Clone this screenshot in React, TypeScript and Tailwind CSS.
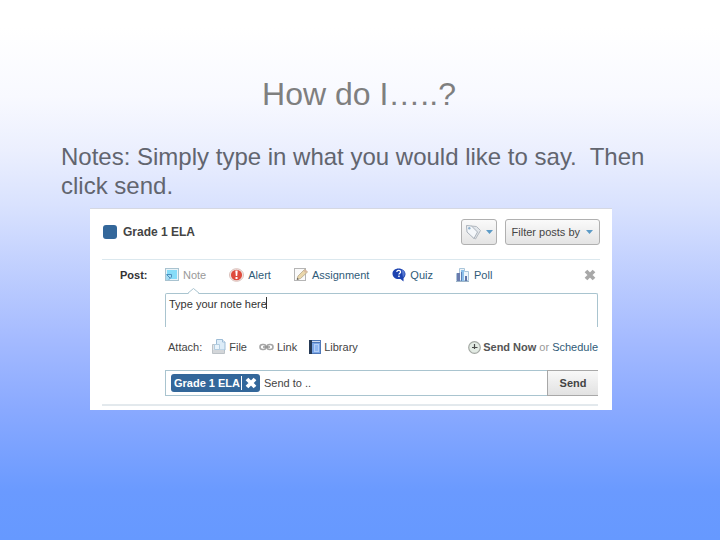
import type { ReactNode } from "react";

/* ---------- icons ---------- */

function NoteIcon() {
  return (
    <svg width="14" height="14" viewBox="0 0 14 14" aria-hidden="true">
      <rect x="0.5" y="0.5" width="13" height="12" fill="#e8f3f8" stroke="#a9c3d0" />
      <rect x="2" y="2" width="10" height="9" fill="#86dcf8" />
      <path d="M1 6h6v3l-3 3H1z" fill="#a5dcf2" />
      <path d="M1.500 6.500h5v2.500l-2.500 2.500M2 7l3 3" fill="none" stroke="#4a8fbe" />
    </svg>
  );
}

function AlertIcon() {
  return (
    <svg width="15" height="14" viewBox="0 0 15 14" aria-hidden="true">
      <ellipse cx="7.500" cy="7" rx="7" ry="6.300" fill="#f3ece9" stroke="#d9bfba" />
      <ellipse cx="7.500" cy="7" rx="5.600" ry="5.200" fill="#de4b3c" />
      <path d="M6.300 2.500h2.400l-.5 5.500H6.800z" fill="#fff" />
      <rect x="6.500" y="9" width="2" height="2" fill="#fff" />
    </svg>
  );
}

function AssignmentIcon() {
  return (
    <svg width="14" height="14" viewBox="0 0 14 14" aria-hidden="true">
      <rect x="0.500" y="0.500" width="11" height="12" fill="#fafafa" stroke="#b5b5b5" />
      <path d="M3 11.500l1-3.500L10.500 1.500l3 2.500L6.500 10.500z" fill="#ead7ab" stroke="#b5a88c" strokeWidth="0.800" />
      <path d="M9.500 3l2.500 2 1.500-1.500-2.500-2z" fill="#d8b9a0" />
      <path d="M2.800 11.800l.6-2 1.500 1.400z" fill="#555" />
    </svg>
  );
}

function QuizIcon() {
  return (
    <svg width="14" height="14" viewBox="0 0 14 14" aria-hidden="true">
      <path
        d="M6.500.5C3 .5.5 2.700.5 5.700s2.500 5.300 6 5.300c.8 0 1.500 0 2 0L11.500 13.500l.1-3.500c1.200-1 1.900-2.500 1.900-4 0-3-3-5.500-7-5.500z"
        fill="#1d43b0"
      />
      <path d="M9.500 1.500c2.300.6 3.300 2.200 3.300 4.200 0 1.400-.7 2.700-1.800 3.500z" fill="#5577d0" />
      <path d="M4.700 4c.2-1.200 1-1.700 2-1.700s1.900.6 1.900 1.600c0 1.300-1.700 1.400-1.700 2.700" fill="none" stroke="#fff" strokeWidth="1.300" />
      <rect x="6.200" y="7.600" width="1.500" height="1.500" fill="#fff" />
    </svg>
  );
}

function PollIcon() {
  return (
    <svg width="14" height="14" viewBox="0 0 14 14" aria-hidden="true">
      <path d="M.5 12.500v-7h3v-5h5v3h4v9z" fill="#eef5fa" stroke="#a9c5da" />
      <rect x="1" y="5" width="3" height="8" fill="#6b7cae" />
      <rect x="5" y="2" width="3" height="11" fill="#8cc0ea" />
      <rect x="5" y="4" width="1" height="9" fill="#5c7fb8" />
      <rect x="9" y="8" width="2" height="5" fill="#5f74a8" />
      <path d="M0 13.500h13" stroke="#9db4c8" />
    </svg>
  );
}

function FileIcon() {
  return (
    <svg width="14" height="16" viewBox="0 0 14 16" aria-hidden="true">
      <path d="M.5 5.500h12v9H.5z" fill="#e2e4e6" stroke="#bcc2c7" />
      <path d="M4.500.5h6l2.500 2.500v8h-8.500z" fill="#dcecf8" stroke="#9dbcd6" />
      <path d="M10.500.5v2.500H13" fill="#fff" stroke="#9dbcd6" />
      <path d="M2.500 5.500h5v5h-5z" fill="#eaf4fb" stroke="#b3cde0" />
      <path d="M1 11h11v3H1z" fill="#d3d6d9" />
    </svg>
  );
}

function LinkIcon() {
  return (
    <svg width="15" height="8" viewBox="0 0 15 8" aria-hidden="true">
      <rect x="1" y="1.500" width="6" height="5" rx="2.500" fill="none" stroke="#a6a6a6" strokeWidth="1.600" />
      <rect x="8" y="1.500" width="6" height="5" rx="2.500" fill="none" stroke="#a6a6a6" strokeWidth="1.600" />
      <path d="M4 4h7" stroke="#8f8f8f" strokeWidth="1.400" />
    </svg>
  );
}

function LibraryIcon() {
  return (
    <svg width="12" height="14" viewBox="0 0 12 14" aria-hidden="true">
      <rect width="12" height="14" fill="#4f78b8" />
      <rect width="3" height="14" fill="#263a56" />
      <rect x="3" y="1" width="8" height="1" fill="#cfdcf0" />
      <rect x="3" y="3" width="8" height="10" fill="#7ba6e6" />
      <rect x="5.500" y="4.500" width="4" height="7" fill="#8fb7f2" stroke="#b4cff7" />
    </svg>
  );
}

function ClockIcon() {
  return (
    <svg width="13" height="13" viewBox="0 0 13 13" aria-hidden="true">
      <circle cx="6.500" cy="6.500" r="5.800" fill="#e3ebe4" stroke="#a3a8a3" strokeWidth="1.200" />
      <path d="M6.500 3v5M4 6.500h5.500" stroke="#4a4a4a" strokeWidth="1.200" />
    </svg>
  );
}

function TagIcon() {
  return (
    <svg width="17" height="16" viewBox="0 0 17 16" aria-hidden="true">
      <path d="M6 2l5.500.5 4 4-5 8.500-3-2z" fill="#e2e6ea" stroke="#b3b9c0" />
      <path d="M1.500 1.500l5 .5 6 6-3.500 6.500-7-6.500z" fill="#f4f7fa" stroke="#aab2bb" />
      <circle cx="4.300" cy="4.300" r="1.200" fill="#8fb0cc" />
    </svg>
  );
}

function CloseIcon({ color }: { color: string }) {
  return (
    <svg width="12" height="12" viewBox="0 0 12 12" aria-hidden="true">
      <path d="M2 2l8 8M10 2l-8 8" stroke={color} strokeWidth="3.800" />
    </svg>
  );
}

function Caret() {
  return (
    <svg width="7" height="4" viewBox="0 0 7 4" aria-hidden="true">
      <path d="M0 0h7L3.500 4z" fill="#5d9bc6" />
    </svg>
  );
}

/* ---------- data ---------- */

const postTypes: { label: string; icon: ReactNode; active?: boolean }[] = [
  { label: "Note", icon: <NoteIcon />, active: true },
  { label: "Alert", icon: <AlertIcon /> },
  { label: "Assignment", icon: <AssignmentIcon /> },
  { label: "Quiz", icon: <QuizIcon /> },
  { label: "Poll", icon: <PollIcon /> },
];

const attachments: { label: string; icon: ReactNode }[] = [
  { label: "File", icon: <FileIcon /> },
  { label: "Link", icon: <LinkIcon /> },
  { label: "Library", icon: <LibraryIcon /> },
];

/* ---------- panel ---------- */

function PanelHeader() {
  return (
    <div className="flex items-center border-b border-[#dbe8ee] pt-2.5 pb-3.5">
      <span className="ml-px size-3.5 rounded-[3px] bg-[#33679a]" />
      <h2 className="ml-1.5 text-xs font-bold text-[#444]">Grade 1 ELA</h2>
      <div className="ml-auto flex gap-2">
        <button
          type="button"
          aria-label="Tags"
          className="flex h-[26px] items-center gap-1 rounded-[3px] border border-[#b0b0b0] bg-linear-to-b from-[#fafafa] to-[#e4e4e4] px-[3px]"
        >
          <TagIcon />
          <Caret />
        </button>
        <button
          type="button"
          className="flex h-[26px] items-center gap-1.5 rounded-[3px] border border-[#b0b0b0] bg-linear-to-b from-[#fafafa] to-[#e4e4e4] px-1.5 text-[#444]"
        >
          Filter posts by
          <Caret />
        </button>
      </div>
    </div>
  );
}

function PostTabs() {
  return (
    <div className="flex items-center pt-[7px] pr-1 pl-[18px]">
      <span className="w-[45px] font-bold text-[#333]">Post:</span>
      <div className="flex gap-[23px]">
        {postTypes.map(({ label, icon, active }) => (
          <button
            key={label}
            type="button"
            className={`flex items-center gap-1 ${active ? "text-[#999]" : "text-[#2f5b78]"}`}
          >
            {icon}
            {label}
          </button>
        ))}
      </div>
      <button type="button" aria-label="Close" className="ml-auto">
        <CloseIcon color="#a8a8a8" />
      </button>
    </div>
  );
}

function Composer() {
  return (
    <div className="mr-0.5 ml-[63px]">
      <div className="relative mt-2.5">
        <textarea
          aria-label="Note"
          defaultValue="Type your note here"
          className="block h-[34px] w-full resize-none overflow-hidden rounded-t-[2px] border border-b-0 border-[#a9c4cf] bg-white px-[3px] py-0.5 text-[#333] outline-none"
        />
        <span className="absolute top-1 left-[101px] h-3 w-px bg-[#333]" />
        <svg className="absolute -top-[5px] left-[22px]" width="13" height="7" viewBox="0 0 13 7" aria-hidden="true">
          <path d="M1 6l5.500-5L12 6v1H1z" fill="#fff" />
          <path d="M.5 5.500L6.500.5l6 5" fill="none" stroke="#a9c4cf" />
        </svg>
      </div>

      <div className="mt-3 flex h-4 items-center pl-[3px] text-[#444]">
        <span>Attach:</span>
        <div className="ml-2.5 flex gap-3">
          {attachments.map(({ label, icon }) => (
            <button key={label} type="button" className="flex items-center gap-[3px]">
              {icon}
              {label}
            </button>
          ))}
        </div>
        <div className="ml-auto flex items-center whitespace-nowrap">
          <ClockIcon />
          <button type="button" className="ml-0.5 font-bold text-[#555]">
            Send Now
          </button>
          <span className="mx-[3px] text-[#999]">or</span>
          <a href="#schedule" className="text-[#2f5b78]">
            Schedule
          </a>
        </div>
      </div>

      <div className="mt-[15px] flex h-[26px] items-stretch border border-r-0 border-[#a9c4cf]">
        <div className="my-[3px] ml-[5px] flex items-center rounded-[3px] bg-[#33679a] px-[3px] font-bold text-white">
          Grade 1 ELA
          <button type="button" aria-label="Remove Grade 1 ELA" className="ml-px flex h-3.5 items-center border-l border-white pl-[3px]">
            <CloseIcon color="#fff" />
          </button>
        </div>
        <input
          type="text"
          aria-label="Recipients"
          placeholder="Send to .."
          className="min-w-0 flex-1 px-1 text-[#444] outline-none placeholder:text-[#444]"
        />
        <button
          type="button"
          className="-my-px w-[51px] border border-r-0 border-[#a8a8a8] bg-linear-to-b from-[#f8f8f8] to-[#e2e2e2] font-bold text-[#444]"
        >
          Send
        </button>
      </div>
    </div>
  );
}

export default function App() {
  return (
    <main className="min-h-screen bg-[linear-gradient(to_bottom,#ffffff_5%,#f8f9ff_18%,#ebeffe_28%,#d9e2fe_38%,#a4baff_63%,#89a9ff_76%,#6a9aff_91%,#6699ff_100%)] pt-[74px] font-['Liberation_Sans',Arial,sans-serif]">
      <h1 className="pr-0.5 text-center text-[32px] leading-10 text-[#7f7f7f]">How do I…..?</h1>
      <p className="mt-7 pr-14 pl-[61px] text-2xl leading-[29px] text-[#62656f]">
        Notes: Simply type in what you would like to say.&nbsp; Then click send.
      </p>
      <section className="mt-2 mr-[108px] ml-[90px] border-t border-[#d5d8e2] bg-white px-3 pb-1 text-[11px] leading-4">
        <PanelHeader />
        <PostTabs />
        <Composer />
        <div className="mt-2 mr-0.5 h-0.5 bg-[#e3e9ed]" />
      </section>
    </main>
  );
}
